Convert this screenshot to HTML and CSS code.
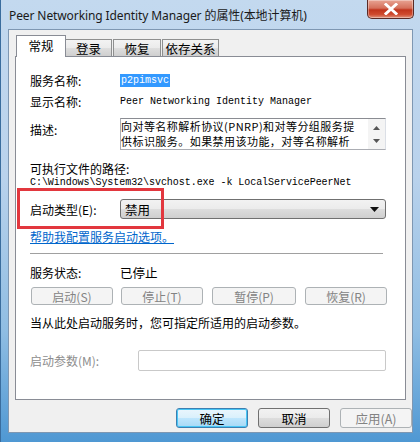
FILE: index.html
```html
<!DOCTYPE html>
<html>
<head>
<meta charset="utf-8">
<link rel="stylesheet" href="styles.css">
</head>
<body>
<div class="window">
  <div class="titlebar">
    <span class="title">Peer Networking Identity Manager 的属性(本地计算机)</span>
    <div class="close">
      <svg width="16" height="12" viewBox="0 0 16 12"><path d="M3 1.5 L13 10.5 M13 1.5 L3 10.5" stroke="#fff" stroke-width="3" stroke-linecap="square" fill="none"/></svg>
    </div>
  </div>
  <div class="client">
    <div class="tabs">
      <div class="tab active">常规</div>
      <div class="tab t2">登录</div>
      <div class="tab t3">恢复</div>
      <div class="tab t4">依存关系</div>
    </div>
    <div class="panel">
      <div class="row r1"><span class="label">服务名称:</span><span class="sel">p2pimsvc</span></div>
      <div class="row r2"><span class="label">显示名称:</span><span class="mono">Peer Networking Identity Manager</span></div>
      <div class="row r3"><span class="label lt">描述:</span>
        <div class="desc">
          <div class="desc-text"><div>向对等名称解析协议(PNRP)和对等分组服务提</div><div>供标识服务。如果禁用该功能，对等名称解析</div></div>
          <div class="scroll">
            <svg width="7" height="4" viewBox="0 0 7 4"><path d="M0 4 L3.5 0 L7 4Z" fill="#555"/></svg>
            <svg width="7" height="4" viewBox="0 0 7 4"><path d="M0 0 L3.5 4 L7 0Z" fill="#555"/></svg>
          </div>
        </div>
      </div>
      <div class="plain r4">可执行文件的路径:</div>
      <div class="mono path">C:\Windows\System32\svchost.exe -k LocalServicePeerNet</div>
      <div class="row r5">
        <span class="label">启动类型(E):</span>
        <div class="select"><span>禁用</span><svg width="9" height="5" viewBox="0 0 9 5"><path d="M0 0 L9 0 L4.5 5Z" fill="#111"/></svg></div>
        <div class="redbox"></div>
      </div>
      <a class="link">帮助我配置服务启动选项。</a>
      <div class="sep"></div>
      <div class="row r6"><span class="label">服务状态:</span><span class="status">已停止</span></div>
      <div class="btnrow">
        <div class="btn dis">启动(S)</div>
        <div class="btn dis">停止(T)</div>
        <div class="btn dis">暂停(P)</div>
        <div class="btn dis">恢复(R)</div>
      </div>
      <div class="plain r7">当从此处启动服务时，您可指定所适用的启动参数。</div>
      <div class="row r8"><span class="label gray">启动参数(M):</span><div class="param"></div></div>
    </div>
    <div class="footer">
      <div class="btn2 ok">确定</div>
      <div class="btn2 cancel">取消</div>
      <div class="btn2 dis">应用(A)</div>
    </div>
  </div>
</div>
</body>
</html>
```
FILE: styles.css
```css
* { box-sizing: border-box; }
html, body { margin: 0; padding: 0; }
body {
  width: 420px; height: 442px; overflow: hidden;
  font-family: "Noto Sans CJK SC", "Noto Sans", sans-serif;
  font-size: 12px; color: #000;
}
.window {
  width: 420px; height: 442px;
  background: linear-gradient(180deg, #c3d9ef 0%, #b9d2ec 40%, #8fbde3 75%, #4f98d3 100%);
  padding: 0 7px 9px 7px;
  display: flex; flex-direction: column;
  border-left: 1px solid #3a6d9e;
}
.titlebar {
  height: 29px; position: relative;
  display: flex; align-items: center;
}
.title {
  font-family: "Noto Sans", "Noto Sans CJK SC", sans-serif;
  font-size: 12px; color: #1a1a1a; padding-left: 1px; margin-top: 1px;
  letter-spacing: -0.1px;
}
.close {
  position: absolute; right: -1px; top: 0; width: 47px; height: 19px;
  border: 1px solid #5a2a26; border-top: none;
  border-radius: 0 0 5px 5px;
  background: linear-gradient(180deg, #e8a493 0%, #d5705b 45%, #c1341c 55%, #cf4a2e 80%, #e0937c 100%);
  display: flex; align-items: center; justify-content: center;
  box-shadow: inset 0 0 0 1px rgba(255,255,255,0.35);
}
.client {
  flex: 1; background: #f0f0f0;
  border: 1px solid #7e97b2;
  padding: 5px 7px 0 6px;
}
.tabs { display: flex; align-items: flex-end; height: 21px; padding-left: 1px; }
.tab {
  height: 17px; border: 1px solid #8e8f8f; border-bottom: none; margin-left: -1px;
  background: linear-gradient(180deg, #f3f3f3 0%, #ebebeb 50%, #dedede 51%, #cfcfcf 100%);
  display: flex; align-items: center; justify-content: center; font-size: 12.5px; padding-top: 1px;
}
.tab.active {
  height: 22px; margin-bottom: -1px; background: #fff; z-index: 2; width: 50px; margin-left: 0;
  border-color: #898c95; padding-bottom: 4px;
}
.t2 { width: 47px; }
.t3 { width: 48px; margin-left: 1px; }
.t4 { width: 57px; margin-left: 1px; }
.panel {
  width: 391px; height: 344px; background: #fff; border: 1px solid #898c95;
  padding: 16px 15px 0 14px;
  display: flex; flex-direction: column;
}
.row { display: flex; align-items: center; }
.label { width: 90px; flex: none; }
.sel { background: #3399ff; color: #fff; font-family: "Liberation Mono", monospace; font-size: 10px; padding: 0 1px; line-height: 13px; }
.mono { font-family: "Liberation Mono", "DejaVu Sans Mono", monospace; font-size: 10px; }
.r1 { height: 14px; }
.r2 { height: 14px; margin-top: 7px; }
.r3 { margin-top: 10px; align-items: flex-start; }
.lt { margin-top: 3px; }
.desc {
  width: 266px; height: 32px; border: 1px solid #abadb3; border-top-color: #8a8c92; border-right-color: #dbdfe6;
  display: flex; background: #fff;
}
.desc-text { flex: 1; font-size: 11px; line-height: 15px; padding: 0; letter-spacing: 0.45px; white-space: nowrap; overflow: hidden; }
.desc-text div { height: 15px; }
.scroll { width: 17px; flex: none; display: flex; flex-direction: column; justify-content: space-between; align-items: center; padding: 7px 0 6px; background: #f4f4f4; }
.plain { height: 14px; display: flex; align-items: center; }
.r4 { margin-top: 11px; }
.path { height: 14px; line-height: 14px; margin-top: 1px; letter-spacing: -0.05px; }
.r5 { margin-top: 9px; position: relative; }
.select {
  width: 266px; height: 20px; border: 1px solid #707070; border-radius: 3px;
  background: linear-gradient(180deg, #f2f2f2 0%, #ebebeb 50%, #dddddd 51%, #cfcfcf 100%);
  display: flex; align-items: center; justify-content: space-between; padding: 0 6px 0 4px; font-size: 12.5px;
}
.redbox {
  position: absolute; left: -13px; top: -11px; width: 147px; height: 41px;
  border: 3px solid #e2373e;
}
.link { color: #0066cc; text-decoration: underline; margin-top: 11px; height: 14px; line-height: 14px; font-size: 12px; }
.sep { height: 1px; background: #a0a0a0; margin-top: 9px; width: 353px; }
.r6 { height: 14px; margin-top: 11px; }
.status { font-size: 12.5px; }
.btnrow { display: flex; margin-top: 8px; gap: 8px; padding-left: 1px; }
.btn {
  height: 18px; border: 1px solid #adb2b5; border-radius: 3px; background: #f4f4f4;
  display: flex; align-items: center; justify-content: center; color: #838383; font-size: 12px;
}
.btnrow .btn { width: 82px; }
.btnrow .btn:nth-child(3) { width: 84px; margin-left: 1px; }
.btnrow .btn:nth-child(4) { width: 82px; margin-left: 1px; }
.r7 { margin-top: 10px; }
.r8 { margin-top: 21px; }
.gray { color: #8d8d8d; width: 108px; }
.param { width: 248px; height: 21px; border: 1px solid #c9c9c9; border-radius: 2px; background: #fff; }
.footer { display: flex; justify-content: flex-end; gap: 10px; margin-top: 8px; padding-right: 1px; width: 398px; }
.btn2 {
  width: 72px; height: 20px; border: 1px solid #707070; border-radius: 3px;
  display: flex; align-items: center; justify-content: center; font-size: 12.5px;
  background: linear-gradient(180deg, #f2f2f2 0%, #ebebeb 50%, #dddddd 51%, #cfcfcf 100%);
}
.btn2.ok {
  border-color: #3c7fb1;
  background: linear-gradient(180deg, #eaf6fd 0%, #d9f0fc 50%, #bee6fd 51%, #a7d9f5 100%);
  box-shadow: inset 0 0 0 1px #48c6f5;
}
.btn2.dis { background: #f4f4f4; border-color: #adb2b5; color: #838383; }
```
